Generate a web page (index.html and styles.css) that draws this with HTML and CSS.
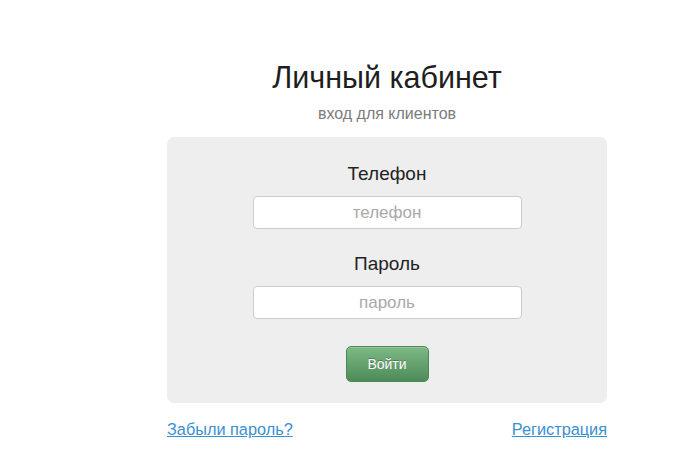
FILE: index.html
```html
<!DOCTYPE html>
<html lang="ru">
<head>
<meta charset="utf-8">
<title>Личный кабинет</title>
<link rel="stylesheet" href="styles.css">
</head>
<body>
<div class="wrap">
  <h1 class="title">Личный кабинет</h1>
  <p class="subtitle">вход для клиентов</p>
  <form class="panel">
    <label class="label" for="phone">Телефон</label>
    <input class="field" id="phone" type="text" placeholder="телефон">
    <label class="label label-second" for="pass">Пароль</label>
    <input class="field" id="pass" type="password" placeholder="пароль">
    <button class="btn" type="button">Войти</button>
  </form>
  <div class="links">
    <a href="#" class="link">Забыли пароль?</a>
    <a href="#" class="link">Регистрация</a>
  </div>
</div>
</body>
</html>
```

FILE: styles.css
```css
html, body {
  margin: 0;
  padding: 0;
  background: #ffffff;
}
body {
  font-family: "Liberation Sans", Arial, sans-serif;
  color: #222;
}
.wrap {
  width: 440px;
  margin-left: 167px;
  padding-top: 59px;
  display: flex;
  flex-direction: column;
}
.title {
  margin: 0;
  font-size: 30.5px;
  font-weight: normal;
  line-height: 36px;
  text-align: center;
  color: #1e1e1e;
}
.subtitle {
  margin: 10px 0 0;
  font-size: 16px;
  line-height: 18px;
  text-align: center;
  color: #7b7b7b;
}
.panel {
  margin-top: 14px;
  height: 266px;
  box-sizing: border-box;
  background: #eeeeee;
  border-radius: 7px;
  display: flex;
  flex-direction: column;
  align-items: center;
  padding-top: 26px;
}
.label {
  font-size: 19px;
  line-height: 22px;
  color: #222;
}
.label-second {
  margin-top: 24px;
}
.field {
  margin-top: 11px;
  width: 269px;
  height: 33px;
  box-sizing: border-box;
  border: 1px solid #cccccc;
  border-radius: 4px;
  background: #fff;
  font-family: "Liberation Sans", Arial, sans-serif;
  font-size: 17px;
  text-align: center;
  color: #333;
  padding: 0 8px;
  outline: none;
}
.field::placeholder {
  color: #a9a9a9;
}
.btn {
  margin-top: 27px;
  width: 83px;
  height: 36px;
  box-sizing: border-box;
  border: 1px solid #4b8a56;
  border-radius: 5px;
  background: linear-gradient(#7cb985, #4d8b58);
  color: #fff;
  font-family: "Liberation Sans", Arial, sans-serif;
  font-size: 14px;
  text-shadow: 0 -1px 0 rgba(0,0,0,0.25);
  box-shadow: inset 0 1px 0 rgba(255,255,255,0.2);
  cursor: pointer;
}
.links {
  margin-top: 16px;
  display: flex;
  justify-content: space-between;
}
.link {
  font-size: 16.3px;
  line-height: 20px;
  color: #3b8fd1;
  text-decoration: underline;
}
```
